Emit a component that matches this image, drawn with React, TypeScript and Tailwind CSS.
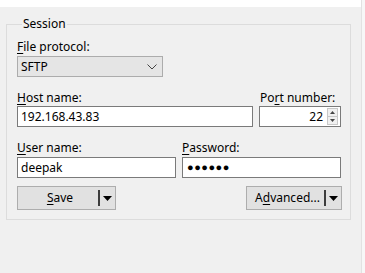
import React from "react";

const font = { fontFamily: '"Noto Sans", "Liberation Sans", sans-serif' };

function DropArrow() {
  return (
    <svg width="9" height="5" viewBox="0 0 9 5" className="block">
      <polygon points="0,0 9,0 4.5,5" fill="#000" />
    </svg>
  );
}

function SplitButton({ label, width }: { label: React.ReactNode; width: string }) {
  return (
    <div
      className={`${width} h-[24px] flex items-center border border-[#adadad] bg-[#e1e1e1] text-[12px] text-black`}
    >
      <div className="flex-1 text-center pl-[4px]">{label}</div>
      <div className="w-[2px] h-[16px] bg-[#3c3c3c]" />
      <div className="w-[15px] flex justify-center">
        <DropArrow />
      </div>
    </div>
  );
}

export default function App() {
  return (
    <div
      className="w-[365px] h-[273px] bg-[#f0f0f0] flex flex-col text-[12px] text-black relative overflow-hidden"
      style={font}
    >
      <div className="h-[7px] bg-white" />
      <fieldset className="ml-[6px] mt-[9px] w-[345px] border border-[#dcdcdc] pl-[10px] pr-[8px] pb-[9px] pt-[7px]">
        <legend className="ml-[5px] px-[1px] leading-[16px]">Session</legend>
        <div className="leading-[16px]">
          <span className="underline underline-offset-2">F</span>ile protocol:
        </div>
        <div className="mt-[1px] w-[146px] h-[21px] border border-[#acacac] bg-[#e5e5e5] flex items-center justify-between pl-[3px] pr-[5px]">
          <span>SFTP</span>
          <svg width="10" height="6" viewBox="0 0 10 6">
            <polyline points="0.5,0.5 5,5 9.5,0.5" fill="none" stroke="#444" strokeWidth="1" />
          </svg>
        </div>

        <div className="mt-[13px] flex gap-[6px]">
          <div className="w-[236px] flex flex-col">
            <div className="leading-[16px]">
              <span className="underline underline-offset-2">H</span>ost name:
            </div>
            <div className="h-[21px] border border-[#7a7a7a] bg-white flex items-center pl-[3px]">
              192.168.43.83
            </div>
          </div>
          <div className="w-[82px] flex flex-col">
            <div className="leading-[16px] pl-[1px]">
              Po<span className="underline underline-offset-2">r</span>t number:
            </div>
            <div className="h-[21px] border border-[#7a7a7a] bg-white flex items-center justify-end pr-[2px]">
              <span className="mr-[4px]">22</span>
              <div className="w-[11px] h-[17px] flex flex-col border border-[#c8c8c8] bg-[#f0f0f0]">
                <div className="flex-1 flex items-center justify-center border-b border-[#c8c8c8]">
                  <svg width="5" height="3" viewBox="0 0 5 3">
                    <polygon points="0,3 5,3 2.5,0" fill="#444" />
                  </svg>
                </div>
                <div className="flex-1 flex items-center justify-center">
                  <svg width="5" height="3" viewBox="0 0 5 3">
                    <polygon points="0,0 5,0 2.5,3" fill="#444" />
                  </svg>
                </div>
              </div>
            </div>
          </div>
        </div>

        <div className="mt-[13px] flex gap-[6px]">
          <div className="w-[159px] flex flex-col">
            <div className="leading-[16px]">
              <span className="underline underline-offset-2">U</span>ser name:
            </div>
            <div className="mt-[1px] h-[21px] border border-[#7a7a7a] bg-white flex items-center pl-[3px]">
              deepak
            </div>
          </div>
          <div className="w-[159px] flex flex-col">
            <div className="leading-[16px]">
              <span className="underline underline-offset-2">P</span>assword:
            </div>
            <div className="mt-[1px] h-[21px] border border-[#7a7a7a] bg-white flex items-center pl-[4px] text-[11px] tracking-[0.5px]">
              ●●●●●●
            </div>
          </div>
        </div>

        <div className="mt-[8px] flex justify-between">
          <SplitButton
            width="w-[99px]"
            label={
              <span>
                <span className="underline underline-offset-2">S</span>ave
              </span>
            }
          />
          <SplitButton
            width="w-[96px]"
            label={
              <span>
                A<span className="underline underline-offset-2">d</span>vanced...
              </span>
            }
          />
        </div>
      </fieldset>
      <div className="absolute right-0 top-0 w-[4px] h-full bg-[#f7f7f7] border-l border-[#e2e2e2]" />
    </div>
  );
}
